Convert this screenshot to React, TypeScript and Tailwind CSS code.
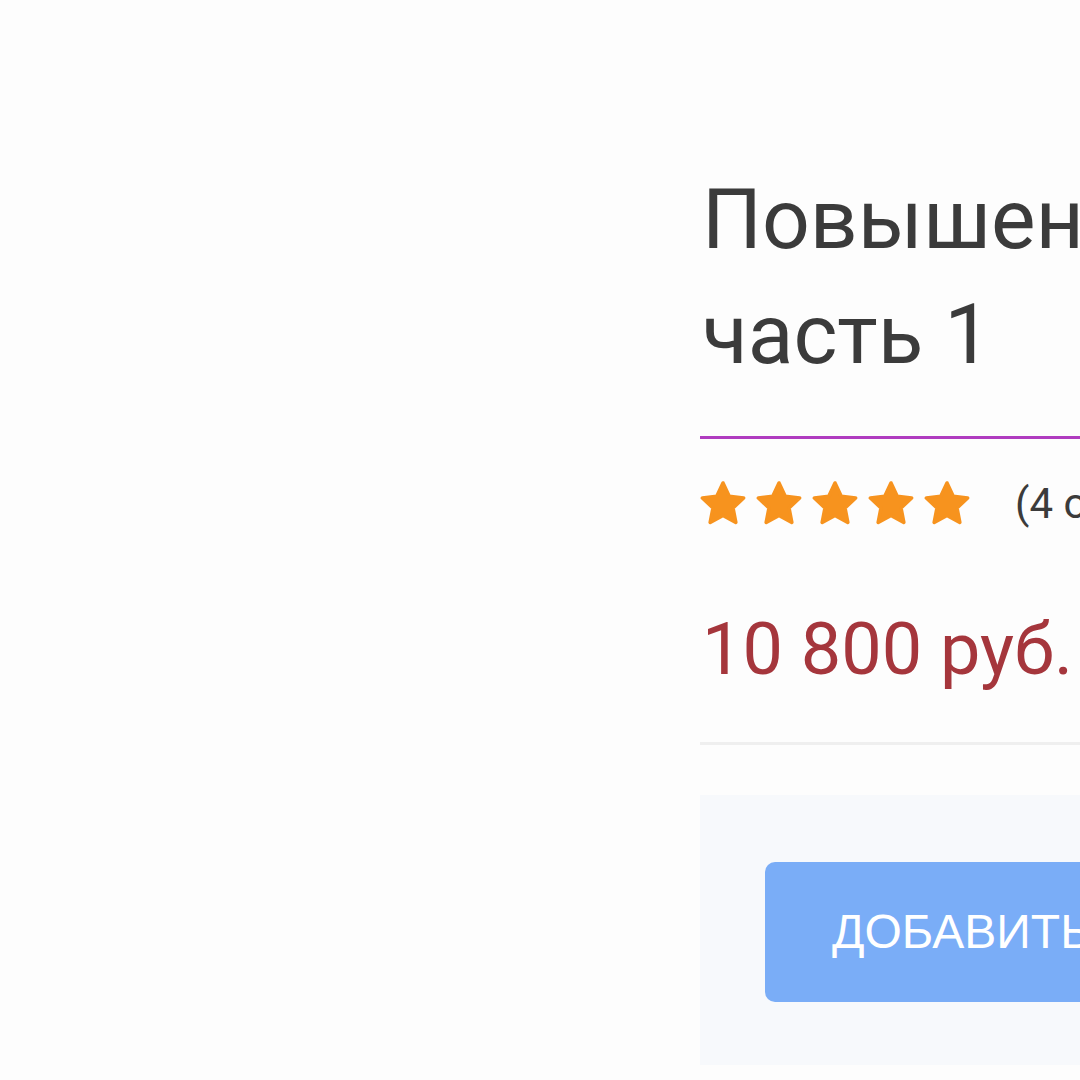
import React from 'react'

function StarIcon() {
  return (
    <svg className="w-[48px] h-[48px]" viewBox="0 0 24 24">
      <path
        d="M12 1.5l3.1 6.6 7.2.9-5.3 5 1.4 7.2L12 17.7l-6.4 3.5 1.4-7.2-5.3-5 7.2-.9z"
        fill="#f7931e"
        stroke="#f7931e"
        strokeWidth="1.8"
        strokeLinejoin="round"
      />
    </svg>
  )
}

export default function App() {
  return (
    <div className="w-[1080px] h-[1080px] overflow-hidden bg-[#fdfdfd] flex font-['Roboto',sans-serif]">
      {/* product image column (empty in this crop) */}
      <div className="w-[700px] shrink-0"></div>

      <div className="flex-1 min-w-0 flex flex-col pt-[162px]">
        <h1 className="pl-[2px] text-[84px] leading-[115px] font-normal text-[#3b3b3b] whitespace-nowrap">
          Повышение квалификации,
          <br />
          часть 1
        </h1>

        <div className="mt-[44px] h-[3px] bg-[#b03cc0] w-[600px]"></div>

        <div className="mt-[41px] flex items-center">
          <div className="flex gap-[8px] -ml-[1px]">
            <StarIcon />
            <StarIcon />
            <StarIcon />
            <StarIcon />
            <StarIcon />
          </div>
          <span className="ml-[44px] text-[42px] leading-[48px] text-[#3b3b3b] whitespace-nowrap">(4 отзыва)</span>
        </div>

        <div className="mt-[86px] pl-[2px] text-[72px] leading-none text-[#a5363c] whitespace-nowrap">
          10 800 руб.
        </div>

        <div className="mt-[56px] h-[3px] bg-[#efefef] w-[600px]"></div>

        <div className="mt-[50px] w-[600px] h-[270px] bg-[#f7f9fc] pl-[65px] pt-[67px]">
          <button className="h-[140px] w-[520px] rounded-[10px] bg-[#7aadf7] text-white text-[48px] font-['Liberation_Sans',sans-serif] uppercase text-left pl-[67px] whitespace-nowrap">
            Добавить в корзину
          </button>
        </div>
      </div>
    </div>
  )
}
